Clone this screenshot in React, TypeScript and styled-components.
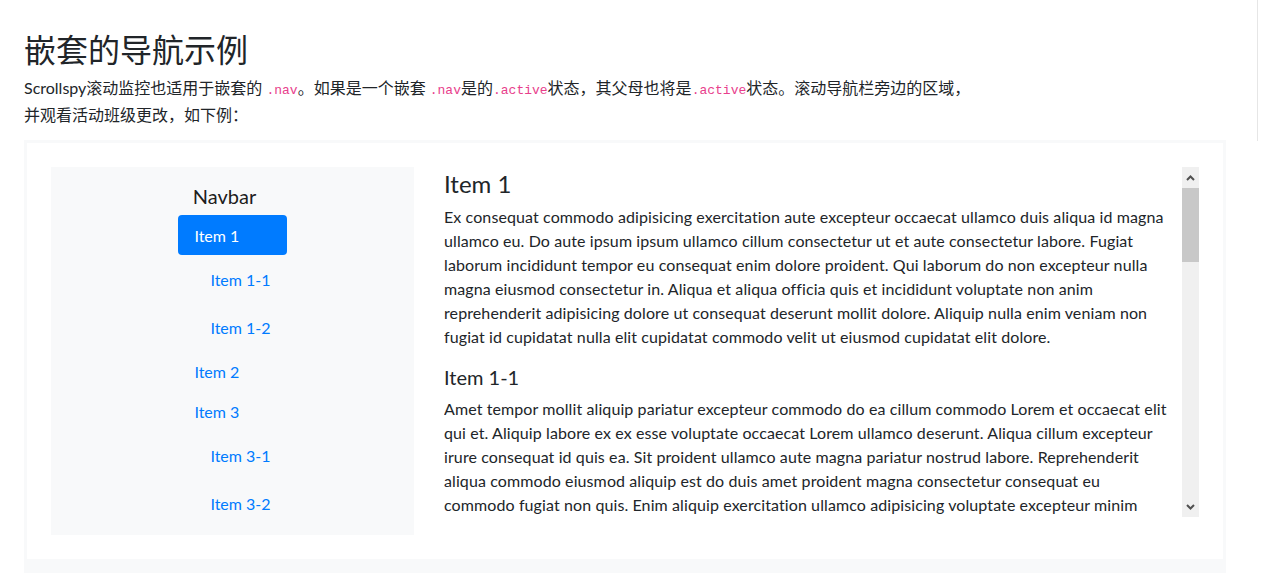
import React from 'react';
import styled, { createGlobalStyle } from 'styled-components';

const sans = `Lato, "Noto Sans CJK SC", sans-serif`;
const mono = `"Liberation Mono", "DejaVu Sans Mono", monospace`;

const Global = createGlobalStyle`
  html, body { margin: 0; padding: 0; background: #fff; }
  body {
    font-family: ${sans};
    font-size: 16px;
    line-height: 1.5;
    color: #212529;
    overflow: hidden;
  }
  * { box-sizing: border-box; }
`;

const Page = styled.div`
  display: flex;
  height: 573px;
  overflow: hidden;
`;

const Main = styled.main`
  flex: none;
  width: 1257px;
  padding: 29px 31px 0 24px;
`;

const Toc = styled.aside`
  flex: none;
  width: 10px;
  height: 141px;
  border-left: 1px solid #e6e6e6;
`;

const Title = styled.h2`
  margin: 0;
  padding-top: 2px;
  font-size: 32px;
  line-height: 38px;
  font-weight: 400;
`;

const Lead = styled.p`
  margin: 7px 0 13px;
  max-width: 80%;
  line-height: 24px;
`;

const Code = styled.code`
  font-family: ${mono};
  font-size: 13px;
  color: #e83e8c;
`;

const Example = styled.div`
  display: flex;
  gap: 30px;
  border: 3px solid #f8f9fa;
  padding: 24px;
`;

const Highlight = styled.div`
  height: 40px;
  background: #f8f9fa;
`;

const Navbar = styled.nav`
  flex: none;
  width: 363px;
  align-self: flex-start;
  display: flex;
  flex-direction: column;
  align-items: center;
  padding: 8px 16px;
  background: #f8f9fa;
`;

const Brand = styled.a`
  margin-right: 16px;
  padding: 6px 0 4px;
  font-size: 20px;
  line-height: 30px;
  color: rgba(0, 0, 0, 0.9);
  text-decoration: none;
`;

const Pills = styled.nav`
  display: flex;
  flex-direction: column;
`;

const NavLink = styled.a<{ $active?: boolean; $sub?: boolean }>`
  display: block;
  padding: 9px 16px 7px;
  margin: ${(p) => (p.$sub ? '4px 0 4px 16px' : '0')};
  line-height: 24px;
  border-radius: 4px;
  text-decoration: none;
  white-space: nowrap;
  color: ${(p) => (p.$active ? '#fff' : '#007bff')};
  background: ${(p) => (p.$active ? '#007bff' : 'transparent')};
`;

const SpyWrap = styled.div`
  flex: 1;
  align-self: flex-start;
  display: flex;
  height: 350px;
`;

const Spy = styled.div`
  flex: 1;
  overflow: hidden;
  padding-top: 1px;
  letter-spacing: 0.1px;
`;

const H4 = styled.h4`
  margin: 0 0 8px;
  padding-top: 3px;
  font-size: 24px;
  line-height: 26px;
  font-weight: 400;
  letter-spacing: 0;
`;

const H5 = styled.h5`
  margin: 0 0 8px;
  font-size: 20px;
  line-height: 24px;
  font-weight: 400;
  letter-spacing: 0;
`;

const Para = styled.p`
  margin: 0 0 16px;
  line-height: 24px;
`;

const Scrollbar = styled.div`
  flex: none;
  width: 17px;
  display: flex;
  flex-direction: column;
  background: #f0f0f0;
`;

const ScrollBtn = styled.div`
  height: 21px;
  display: flex;
  align-items: center;
  justify-content: center;
`;

const Thumb = styled.div`
  height: 74px;
  background: #c8c8c8;
`;

const Track = styled.div`
  flex: 1;
`;

const Chevron = ({ up }: { up?: boolean }) => (
  <svg width="9" height="6" viewBox="0 0 9 6">
    <polyline
      points={up ? '1,5 4.5,1.5 8,5' : '1,1 4.5,4.5 8,1'}
      fill="none"
      stroke="#505050"
      strokeWidth="2"
    />
  </svg>
);

export default function App() {
  return (
    <>
      <Global />
      <Page>
        <Main>
          <Title>嵌套的导航示例</Title>
          <Lead>
            Scrollspy滚动监控也适用于嵌套的 <Code>.nav</Code>。如果是一个嵌套 <Code>.nav</Code>是的
            <Code>.active</Code>状态，其父母也将是<Code>.active</Code>
            状态。滚动导航栏旁边的区域，并观看活动班级更改，如下例：
          </Lead>
          <Example>
            <Navbar>
              <Brand href="#">Navbar</Brand>
              <Pills>
                <NavLink $active href="#item-1">Item 1</NavLink>
                <Pills>
                  <NavLink $sub href="#item-1-1">Item 1-1</NavLink>
                  <NavLink $sub href="#item-1-2">Item 1-2</NavLink>
                </Pills>
                <NavLink href="#item-2">Item 2</NavLink>
                <NavLink href="#item-3">Item 3</NavLink>
                <Pills>
                  <NavLink $sub href="#item-3-1">Item 3-1</NavLink>
                  <NavLink $sub href="#item-3-2">Item 3-2</NavLink>
                </Pills>
              </Pills>
            </Navbar>
            <SpyWrap>
              <Spy>
                <H4 id="item-1">Item 1</H4>
                <Para>
                  Ex consequat commodo adipisicing exercitation aute excepteur occaecat ullamco duis aliqua id magna
                  ullamco eu. Do aute ipsum ipsum ullamco cillum consectetur ut et aute consectetur labore. Fugiat
                  laborum incididunt tempor eu consequat enim dolore proident. Qui laborum do non excepteur nulla
                  magna eiusmod consectetur in. Aliqua et aliqua officia quis et incididunt voluptate non anim
                  reprehenderit adipisicing dolore ut consequat deserunt mollit dolore. Aliquip nulla enim veniam non
                  fugiat id cupidatat nulla elit cupidatat commodo velit ut eiusmod cupidatat elit dolore.
                </Para>
                <H5 id="item-1-1">Item 1-1</H5>
                <Para>
                  Amet tempor mollit aliquip pariatur excepteur commodo do ea cillum commodo Lorem et occaecat elit
                  qui et. Aliquip labore ex ex esse voluptate occaecat Lorem ullamco deserunt. Aliqua cillum excepteur
                  irure consequat id quis ea. Sit proident ullamco aute magna pariatur nostrud labore. Reprehenderit
                  aliqua commodo eiusmod aliquip est do duis amet proident magna consectetur consequat eu
                  <br />
                  commodo fugiat non quis. Enim aliquip exercitation ullamco adipisicing voluptate excepteur minim
                  <br />
                  exercitation minim minim commodo adipisicing exercitation officia nisi adipisicing. Anim id duis
                  qui consequat labore adipisicing sint dolor elit cillum anim et fugiat.
                </Para>
              </Spy>
              <Scrollbar>
                <ScrollBtn>
                  <Chevron up />
                </ScrollBtn>
                <Thumb />
                <Track />
                <ScrollBtn>
                  <Chevron />
                </ScrollBtn>
              </Scrollbar>
            </SpyWrap>
          </Example>
          <Highlight />
        </Main>
        <Toc />
      </Page>
    </>
  );
}
